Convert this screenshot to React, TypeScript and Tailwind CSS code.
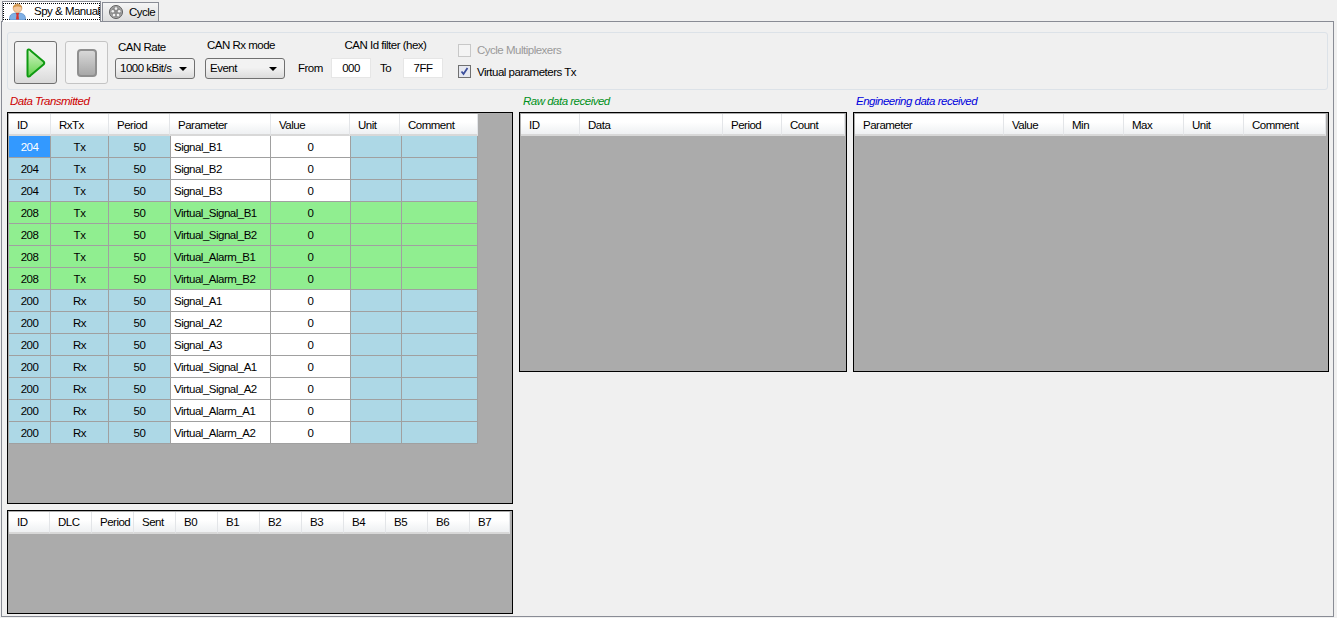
const FONT = "font-['Liberation_Sans',Arial,sans-serif]";

type Row = { id: string; dir: string; param: string; kind: "blue" | "green"; selected?: boolean };

const rows: Row[] = [
  { id: "204", dir: "Tx", param: "Signal_B1", kind: "blue", selected: true },
  { id: "204", dir: "Tx", param: "Signal_B2", kind: "blue" },
  { id: "204", dir: "Tx", param: "Signal_B3", kind: "blue" },
  { id: "208", dir: "Tx", param: "Virtual_Signal_B1", kind: "green" },
  { id: "208", dir: "Tx", param: "Virtual_Signal_B2", kind: "green" },
  { id: "208", dir: "Tx", param: "Virtual_Alarm_B1", kind: "green" },
  { id: "208", dir: "Tx", param: "Virtual_Alarm_B2", kind: "green" },
  { id: "200", dir: "Rx", param: "Signal_A1", kind: "blue" },
  { id: "200", dir: "Rx", param: "Signal_A2", kind: "blue" },
  { id: "200", dir: "Rx", param: "Signal_A3", kind: "blue" },
  { id: "200", dir: "Rx", param: "Virtual_Signal_A1", kind: "blue" },
  { id: "200", dir: "Rx", param: "Virtual_Signal_A2", kind: "blue" },
  { id: "200", dir: "Rx", param: "Virtual_Alarm_A1", kind: "blue" },
  { id: "200", dir: "Rx", param: "Virtual_Alarm_A2", kind: "blue" },
];

const HeaderRow = ({ cols, names, pad = "pt-[3px]" }: { cols: string; names: string[]; pad?: string }) => (
  <div className={`grid h-[22px] ${cols}`}>
    {names.map((n, i) => (
      <div
        key={i}
        className={`flex items-center pl-2 ${pad} overflow-hidden whitespace-nowrap border-r border-b-2 border-r-[#e3e5e8] border-b-[#d8d8d8] bg-gradient-to-b from-white from-40% to-[#eef0f2] text-black`}
      >
        {n}
      </div>
    ))}
  </div>
);

const Combo = ({ value }: { value: string }) => (
  <div className="flex items-center justify-between w-[80px] h-[21px] pl-[4px] pr-[7px] rounded-[3px] border border-[#707070] bg-gradient-to-b from-[#f2f2f2] from-45% to-[#dcdcdc]">
    <span className="pt-px">{value}</span>
    <span className="w-0 h-0 border-x-[4px] border-t-[4px] border-x-transparent border-t-black" />
  </div>
);

const Check = ({ checked, label }: { checked?: boolean; label: string }) => (
  <div className={`flex items-center h-[13px] gap-[6px] ${checked ? "text-black" : "text-[#9a9a9a]"}`}>
    <span className={`flex items-center justify-center w-[13px] h-[13px] border ${checked ? "border-[#707070] bg-[#e6e8f0]" : "border-[#c8c8c8] bg-[#f4f4f4]"}`}>
      {checked && (
        <svg width="9" height="9" viewBox="0 0 9 9">
          <path d="M1.5 4.5 L3.5 7 L7.5 1" fill="none" stroke="#3c4f9c" strokeWidth="1.8" />
        </svg>
      )}
    </span>
    <span className={checked ? "pt-[3px]" : "pt-px"}>{label}</span>
  </div>
);

const PersonIcon = () => (
  <svg width="17" height="17" viewBox="0 0 17 17" className="relative z-10 shrink-0 -mt-px">
    <path d="M0.5 16 C0.5 11.5 3 10 8.5 10 C14 10 16.5 11.5 16.5 16 Q16.5 17 15 17 L2 17 Q0.5 17 0.5 16 Z" fill="#7fb0e6" stroke="#4a7fbe" strokeWidth="0.6" />
    <path d="M6.8 10 L10.2 10 L9.5 12 L10 16.5 L7 16.5 L7.5 12 Z" fill="#d8342c" />
    <circle cx="8.5" cy="5.2" r="4.4" fill="#f6c79a" stroke="#b98650" strokeWidth="0.5" />
    <path d="M4 5 C3.6 0 13.4 0 13 5 C11 3 6 3 4 5 Z" fill="#d0954a" />
  </svg>
);

const CycleIcon = () => (
  <svg width="14" height="14" viewBox="0 0 14 14" className="shrink-0">
    <circle cx="7" cy="7" r="6.5" fill="#a8a8a8" stroke="#5e5e5e" />
    <circle cx="7" cy="7" r="5" fill="#8c8c8c" />
    <circle cx="7" cy="3.6" r="1.3" fill="#f2f2f2" />
    <circle cx="3.8" cy="6.2" r="1.3" fill="#f2f2f2" />
    <circle cx="10.2" cy="6.2" r="1.3" fill="#f2f2f2" />
    <circle cx="5" cy="10" r="1.3" fill="#f2f2f2" />
    <circle cx="9" cy="10" r="1.3" fill="#f2f2f2" />
  </svg>
);

const Toolbar = () => (
  <div className="flex h-[58px] ml-[5px] mr-[5px] mt-[10px] rounded-[3px] border border-[#dce2e8] bg-[#f0f0f0]">
    <button className="flex items-center justify-center w-[43px] h-[43px] ml-[6px] mt-[8px] rounded-[3px] border border-[#707070] bg-gradient-to-b from-[#f2f2f2] from-50% to-[#d9d9d9]">
      <svg width="20" height="32" viewBox="0 0 20 32">
        <defs>
          <linearGradient id="play" x1="0" y1="0" x2="0" y2="1">
            <stop offset="0" stopColor="#d6f5c8" />
            <stop offset="1" stopColor="#62d24c" />
          </linearGradient>
        </defs>
        <path d="M3 2.5 Q1.5 2 1.5 4 L1.5 28 Q1.5 30 3 29.5 Q4 29.5 5 28 L17.5 17.5 Q19 16 17.5 14.5 L5 4 Q4 2.5 3 2.5 Z" fill="url(#play)" stroke="#0f9a12" strokeWidth="2" strokeLinejoin="round" />
      </svg>
    </button>
    <button className="flex items-center justify-center w-[43px] h-[43px] ml-[8px] mt-[8px] rounded-[3px] border border-[#c4c4c4] bg-[#f4f4f4]">
      <span className="w-[20px] h-[28px] rounded-[4px] border-2 border-[#8f8f8f] bg-gradient-to-b from-[#d8d8d8] to-[#a8a8a8]" />
    </button>
    <div className="flex flex-col ml-[7px] mt-[8px]">
      <span className="ml-[3px] h-[17px] pb-[4px] flex items-center">CAN Rate</span>
      <Combo value="1000 kBit/s" />
    </div>
    <div className="flex flex-col ml-[10px] mt-[4px]">
      <span className="ml-[2px] h-[21px] pb-[4px] flex items-center">CAN Rx mode</span>
      <Combo value="Event" />
    </div>
    <div className="flex flex-col w-[145px] ml-[13px] mt-[4px]">
      <span className="h-[21px] pb-[4px] flex items-center justify-center ml-[30px]">CAN Id filter (hex)</span>
      <div className="flex items-center h-[20px]">
        <span className="w-[33px] pt-px">From</span>
        <span className="flex items-center justify-center w-[40px] h-[20px] pt-px bg-white border border-[#e6e6e6]">000</span>
        <span className="w-[32px] pl-[9px] pt-px">To</span>
        <span className="flex items-center justify-center w-[40px] h-[20px] pt-px bg-white border border-[#e6e6e6]">7FF</span>
      </div>
    </div>
    <div className="flex flex-col gap-[8px] ml-[15px] mt-[11px]">
      <Check label="Cycle Multiplexers" />
      <Check checked label="Virtual parameters Tx" />
    </div>
  </div>
);

const Caption = ({ color, text, inset }: { color: string; text: string; inset: string }) => (
  <div className={`h-[22px] flex items-center pt-[2px] italic ${inset} ${color}`}>{text}</div>
);

export default function App() {
  return (
    <div className={`${FONT} relative w-[1337px] h-[618px] overflow-hidden bg-[#f0f0f0] text-[11.5px] leading-none tracking-[-0.5px] text-black`}>
      <div className="flex items-end h-[21px] pl-[2px] gap-px">
        <div className="relative z-10 flex items-center h-[21px] w-[99px] -mb-px pl-[6px] gap-[8px] bg-white border-x border-t border-[#898c95]">
          <PersonIcon />
          <span className="whitespace-nowrap">Spy &amp; Manual</span>
          <span className="absolute left-0 right-0 top-px bottom-[2px] border border-dotted border-black" />
        </div>
        <div className="flex items-center h-[19px] w-[57px] pl-[6px] gap-[6px] bg-gradient-to-b from-[#f5f5f5] to-[#dedede] border-x border-t border-[#898c95]">
          <CycleIcon />
          <span className="pt-[2px]">Cycle</span>
        </div>
      </div>
      <div className="h-[596px] w-[1333px] ml-px border border-[#898c95] bg-[#f0f0f0]">
        <Toolbar />
        <div className="flex ml-[5px] gap-[6px]">
          <div className="flex flex-col w-[506px]">
            <Caption color="text-[#cc0000]" text="Data Transmitted" inset="pl-[3px]" />
            <div className="h-[392px] border border-black bg-[#ababab] pl-px pt-px">
              <HeaderRow
                cols="grid-cols-[42px_58px_61px_101px_79px_50px_78px] w-[469px]"
                names={["ID", "RxTx", "Period", "Parameter", "Value", "Unit", "Comment"]}
              />
              {rows.map((r, i) => (
                <div
                  key={i}
                  className={`grid grid-cols-[42px_58px_62px_100px_80px_51px_76px] w-[469px] h-[22px] ${r.kind === "green" ? "bg-[#90ee90]" : "bg-[#add8e6]"}`}
                >
                  <div className={`flex items-center justify-center pt-[2px] border-r border-b border-[#a0a0a0] ${r.selected ? "bg-[#3399ff] text-white" : ""}`}>{r.id}</div>
                  <div className="flex items-center justify-center pt-[2px] border-r border-b border-[#a0a0a0]">{r.dir}</div>
                  <div className="flex items-center justify-center pt-[2px] border-r border-b border-[#a0a0a0]">50</div>
                  <div className={`flex items-center pl-[3px] pt-[2px] border-r border-b border-[#a0a0a0] ${r.kind === "green" ? "" : "bg-white"}`}>{r.param}</div>
                  <div className={`flex items-center justify-center pt-[2px] border-r border-b border-[#a0a0a0] ${r.kind === "green" ? "" : "bg-white"}`}>0</div>
                  <div className="border-r border-b border-[#a0a0a0]" />
                  <div className="border-r border-b border-[#a0a0a0]" />
                </div>
              ))}
            </div>
            <div className="h-[104px] mt-[6px] border border-black bg-[#ababab] pl-px pt-px">
              <HeaderRow
                pad="pt-px"
                cols="grid-cols-[41px_42px_42px_42px_42px_42px_42px_42px_42px_42px_42px_40px] w-[501px]"
                names={["ID", "DLC", "Period", "Sent", "B0", "B1", "B2", "B3", "B4", "B5", "B6", "B7"]}
              />
            </div>
          </div>
          <div className="flex flex-col w-[328px]">
            <Caption color="text-[#009020]" text="Raw data received" inset="pl-[4px]" />
            <div className="h-[260px] border border-black bg-[#ababab] pl-px pt-px">
              <HeaderRow cols="grid-cols-[59px_143px_59px_63px]" names={["ID", "Data", "Period", "Count"]} />
            </div>
          </div>
          <div className="flex flex-col w-[476px]">
            <Caption color="text-[#0000dd]" text="Engineering data received" inset="pl-[3px]" />
            <div className="h-[260px] border border-black bg-[#ababab] pl-px pt-px">
              <HeaderRow
                cols="grid-cols-[149px_60px_60px_60px_60px_82px]"
                names={["Parameter", "Value", "Min", "Max", "Unit", "Comment"]}
              />
            </div>
          </div>
        </div>
      </div>
    </div>
  );
}
